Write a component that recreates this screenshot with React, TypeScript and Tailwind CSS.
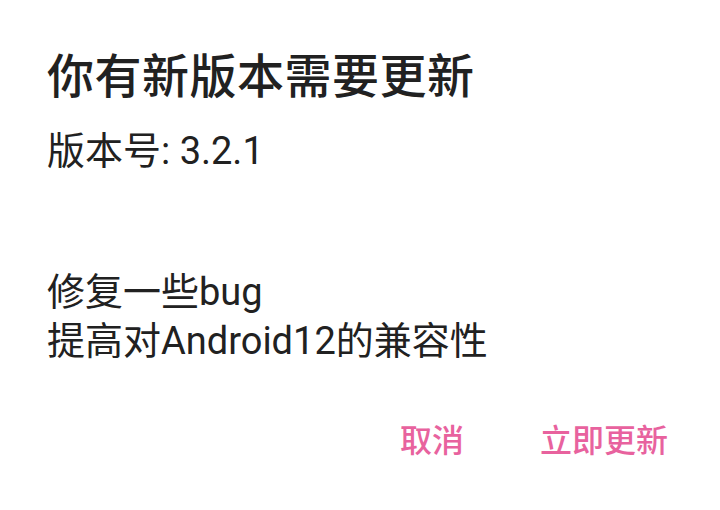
import React from "react";

const notes = ["修复一些bug", "提高对Android12的兼容性"];

function UpdateDialog() {
  return (
    <div
      className="w-[720px] h-[510px] bg-white text-[#212121] pl-[47px] pr-[52px] pt-[48px] flex flex-col"
      style={{ fontFamily: 'Roboto, "Noto Sans CJK SC", sans-serif' }}
    >
      {/* Title */}
      <h1 className="text-[47px] leading-[58px] font-medium tracking-[0.5px]">你有新版本需要更新</h1>

      {/* Version */}
      <p className="mt-[23px] text-[38px] leading-[44px]">版本号: 3.2.1</p>

      {/* Changelog */}
      <div className="mt-[95px] text-[38px] leading-[49px]">
        {notes.map((line) => (
          <p key={line}>{line}</p>
        ))}
      </div>

      {/* Actions */}
      <div className="mt-[55px] flex justify-end gap-[76px] text-[32px] leading-[40px] text-[#e8629e]">
        <button className="font-medium">取消</button>
        <button className="font-medium">立即更新</button>
      </div>
    </div>
  );
}

export default function App() {
  return <UpdateDialog />;
}
